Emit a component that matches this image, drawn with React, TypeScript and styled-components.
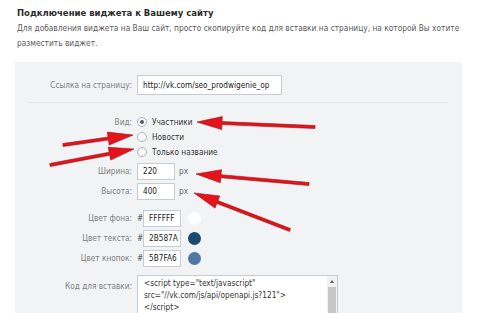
import React from "react";
import styled, { createGlobalStyle } from "styled-components";

const Global = createGlobalStyle`
  html, body { margin: 0; padding: 0; background: #ffffff; }
  body {
    font-family: "DejaVu Sans Condensed", "Liberation Sans", Arial, sans-serif;
    width: 480px;
    height: 313px;
    overflow: hidden;
  }
`;

const FS = 8.2;

const Page = styled.div`
  position: relative;
  width: 480px;
  height: 313px;
  overflow: hidden;
`;

const Header = styled.div`
  padding: 6px 0 0 17px;
`;

const Title = styled.div`
  font-weight: bold;
  font-size: 9.45px;
  line-height: 14px;
  color: #2b2b2b;
`;

const Desc = styled.div`
  margin-top: 1px;
  width: 450px;
  font-size: 8.3px;
  line-height: 15px;
  color: #5a5a5a;
`;

const Panel = styled.div`
  margin: 11px 0 0 15px;
  width: 447px;
  height: 260px;
  box-sizing: border-box;
  padding-top: 13px;
  background: #f2f3f5;
`;

const Row = styled.div<{ $h: number; $mt?: number }>`
  display: flex;
  align-items: center;
  height: ${(p) => p.$h}px;
  margin-top: ${(p) => p.$mt ?? 0}px;
`;

const TopRow = styled.div<{ $mt?: number }>`
  display: flex;
  align-items: flex-start;
  margin-top: ${(p) => p.$mt ?? 0}px;
`;

const Label = styled.div<{ $pt?: number }>`
  width: 117px;
  margin-right: 5px;
  padding-top: ${(p) => p.$pt ?? 0}px;
  text-align: right;
  font-size: ${FS}px;
  color: #808080;
  white-space: nowrap;
`;

const Field = styled.div<{ $w: number; $h: number }>`
  width: ${(p) => p.$w}px;
  height: ${(p) => p.$h}px;
  box-sizing: border-box;
  border: 1px solid #c5ccd4;
  background: #ffffff;
  padding-left: 5px;
  display: flex;
  align-items: center;
  font-size: ${FS}px;
  color: #222;
  white-space: nowrap;
  overflow: hidden;
`;

const Unit = styled.span`
  margin-left: 4px;
  font-size: ${FS}px;
  color: #666;
`;

const Hash = styled.span`
  width: 6px;
  font-size: ${FS}px;
  color: #444;
`;

const Swatch = styled.div<{ $c: string }>`
  width: 13px;
  height: 13px;
  margin-left: 7px;
  border-radius: 50%;
  background: ${(p) => p.$c};
`;

const Divider = styled.div`
  margin: 7px 14px 0 15px;
  height: 1px;
  background: #e2e5e9;
`;

const RadioGroup = styled.div`
  margin-top: 11px;
`;

const RadioLine = styled.div`
  display: flex;
  align-items: center;
  height: 15px;
  padding-left: 122px;
`;

const RadioCircle = styled.span<{ $on?: boolean }>`
  position: relative;
  width: 10px;
  height: 10px;
  box-sizing: border-box;
  border-radius: 50%;
  border: 1px solid #a9b1bb;
  background: #fff;
  margin-right: 5px;
  &::after {
    content: "";
    display: ${(p) => (p.$on ? "block" : "none")};
    position: absolute;
    left: 2px;
    top: 2px;
    width: 4px;
    height: 4px;
    border-radius: 50%;
    background: #4f5a66;
  }
`;

const RadioText = styled.span`
  font-size: ${FS}px;
  color: #333;
`;

const RadioLabelRow = styled.div`
  display: flex;
  align-items: center;
  height: 15px;
`;

const CodeBox = styled.div`
  position: relative;
  width: 201px;
  height: 60px;
  box-sizing: border-box;
  border: 1px solid #c5ccd4;
  background: #fff;
  display: flex;
`;

const CodeText = styled.div`
  flex: 1;
  padding: 1px 0 0 6px;
  font-size: ${FS}px;
  line-height: 12px;
  color: #333;
  white-space: pre;
  overflow: hidden;
`;

const ScrollBar = styled.div`
  width: 10px;
  display: flex;
  flex-direction: column;
  background: #f0f0f0;
`;

const ScrollArrow = styled.div`
  height: 10px;
  display: flex;
  align-items: center;
  justify-content: center;
  &::before {
    content: "";
    border-left: 2.5px solid transparent;
    border-right: 2.5px solid transparent;
    border-bottom: 3px solid #606060;
  }
`;

const ScrollThumb = styled.div`
  margin: 1px 1px 0;
  flex: 1;
  background: #c6c6c6;
`;

const Overlay = styled.svg`
  position: absolute;
  left: 0;
  top: 0;
  pointer-events: none;
`;

type Arrow = [number, number, number, number];

const arrows: Arrow[] = [
  [315, 127, 197, 122],
  [63, 145, 133, 135],
  [50, 165, 134, 149],
  [309, 184, 196, 174],
  [290, 230, 194, 193],
];

function arrowPoints([x1, y1, x2, y2]: Arrow): string {
  const dx = x2 - x1;
  const dy = y2 - y1;
  const L = Math.hypot(dx, dy);
  const ux = dx / L;
  const uy = dy / L;
  const nx = -uy;
  const ny = ux;
  const head = 25;
  const hw = 6.5;
  const sw = 1.5;
  const bx = x2 - ux * head;
  const by = y2 - uy * head;
  const pts: [number, number][] = [
    [x1 + nx * sw, y1 + ny * sw],
    [bx + nx * sw, by + ny * sw],
    [bx + nx * hw, by + ny * hw],
    [x2, y2],
    [bx - nx * hw, by - ny * hw],
    [bx - nx * sw, by - ny * sw],
    [x1 - nx * sw, y1 - ny * sw],
  ];
  return pts.map((p) => `${p[0].toFixed(1)},${p[1].toFixed(1)}`).join(" ");
}

export default function App() {
  return (
    <Page>
      <Global />
      <Header>
        <Title>Подключение виджета к Вашему сайту</Title>
        <Desc>
          Для добавления виджета на Ваш сайт, просто скопируйте код для вставки на страницу, на которой Вы хотите
          разместить виджет.
        </Desc>
      </Header>
      <Panel>
        <Row $h={20}>
          <Label>Ссылка на страницу:</Label>
          <Field $w={145} $h={20}>http://vk.com/seo_prodwigenie_op</Field>
        </Row>
        <Divider />
        <RadioGroup>
          <RadioLabelRow>
            <Label>Вид:</Label>
            <RadioCircle $on />
            <RadioText>Участники</RadioText>
          </RadioLabelRow>
          <RadioLine>
            <RadioCircle />
            <RadioText>Новости</RadioText>
          </RadioLine>
          <RadioLine>
            <RadioCircle />
            <RadioText>Только название</RadioText>
          </RadioLine>
        </RadioGroup>
        <Row $h={20} $mt={2}>
          <Label>Ширина:</Label>
          <Field $w={38} $h={17}>220</Field>
          <Unit>px</Unit>
        </Row>
        <Row $h={20}>
          <Label>Высота:</Label>
          <Field $w={38} $h={17}>400</Field>
          <Unit>px</Unit>
        </Row>
        <Row $h={20} $mt={7}>
          <Label>Цвет фона:</Label>
          <Hash>#</Hash>
          <Field $w={38} $h={17}>FFFFFF</Field>
          <Swatch $c="#ffffff" />
        </Row>
        <Row $h={20}>
          <Label>Цвет текста:</Label>
          <Hash>#</Hash>
          <Field $w={38} $h={17}>2B587A</Field>
          <Swatch $c="#1b4a6e" />
        </Row>
        <Row $h={20}>
          <Label>Цвет кнопок:</Label>
          <Hash>#</Hash>
          <Field $w={38} $h={17}>5B7FA6</Field>
          <Swatch $c="#4f78a3" />
        </Row>
        <TopRow $mt={7}>
          <Label $pt={6}>Код для вставки:</Label>
          <CodeBox>
            <CodeText>
              {'<script type="text/javascript"\nsrc="//vk.com/js/api/openapi.js?121">\n</script>'}
            </CodeText>
            <ScrollBar>
              <ScrollArrow />
              <ScrollThumb />
            </ScrollBar>
          </CodeBox>
        </TopRow>
      </Panel>
      <Overlay width={480} height={313} viewBox="0 0 480 313">
        {arrows.map((a, i) => (
          <polygon key={i} points={arrowPoints(a)} fill="#e3141c" stroke="#9e0a0e" strokeWidth={0.6} strokeLinejoin="round" />
        ))}
      </Overlay>
    </Page>
  );
}
